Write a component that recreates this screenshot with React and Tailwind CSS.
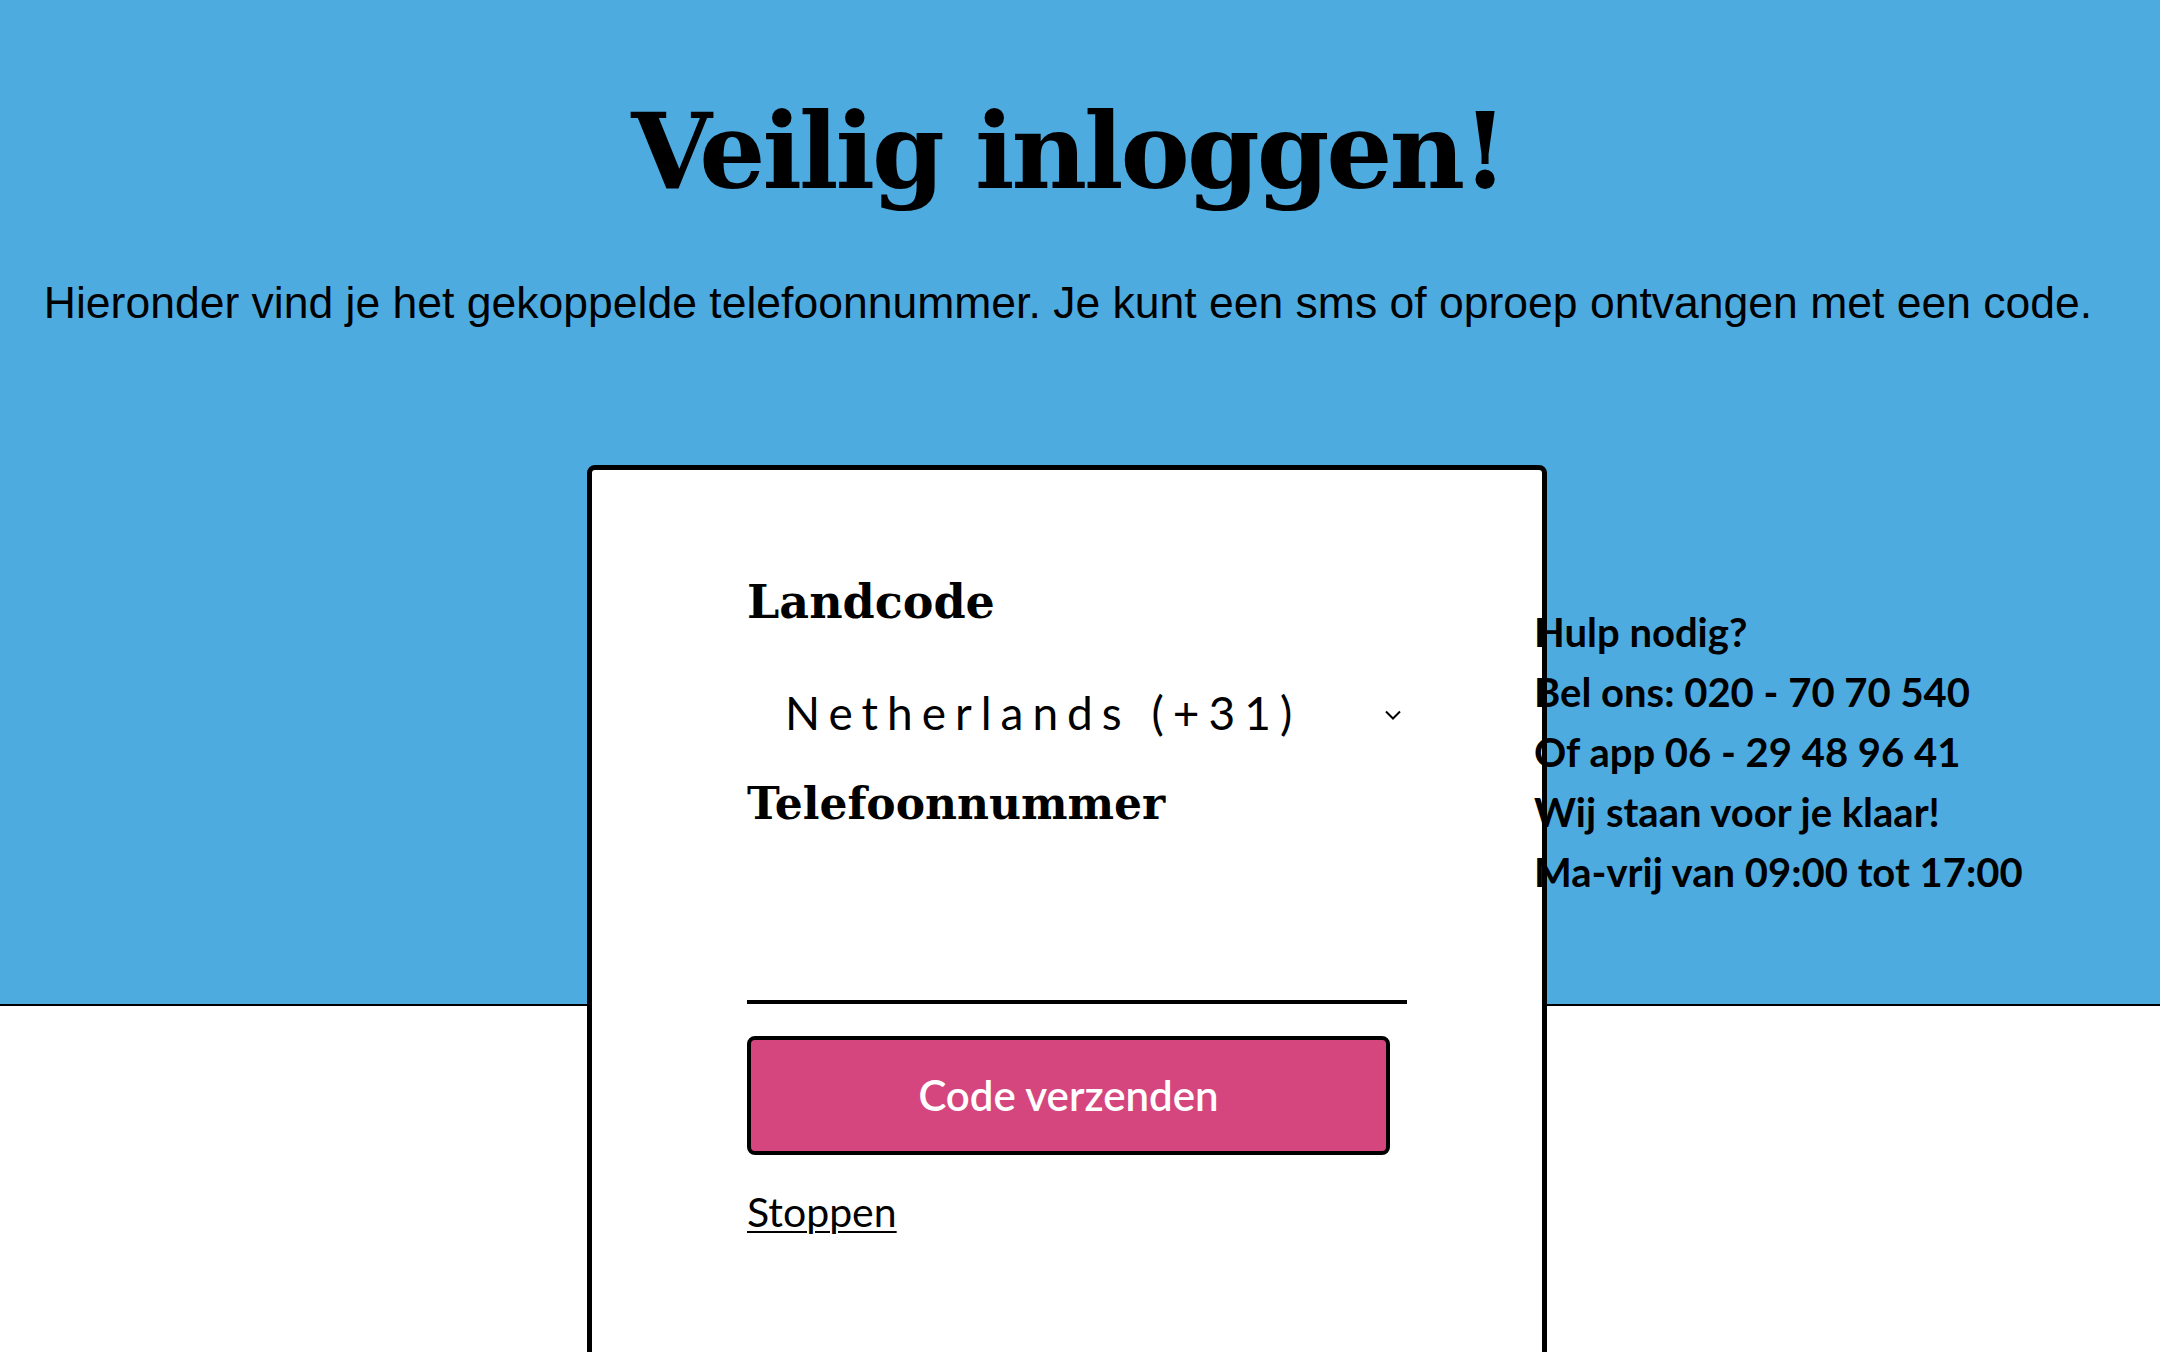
export default function App() {
  return (
    <div className="min-h-screen bg-white overflow-hidden">
      <div className="h-[1006px] bg-[#4eabe0] border-b-2 border-black">
        <div className="pr-[24px]">
          <h1 className="pt-[92px] text-center text-[104px] leading-[120px] font-bold tracking-[-3px] text-black font-['DejaVu_Serif',serif]">
            Veilig inloggen!
          </h1>
          <p className="mt-[65px] text-center text-[44.5px] leading-[52px] text-black font-['Liberation_Sans',Arial,sans-serif]">
            Hieronder vind je het gekoppelde telefoonnummer. Je kunt een sms of oproep ontvangen met een code.
          </p>
        </div>
        <div className="mt-[136px] flex items-start pl-[587px]">
          <div className="w-[960px] h-[1000px] shrink-0 bg-white border-[5px] border-black rounded-[8px] pl-[155px] pt-[104px]">
            <div className="w-[660px]">
              <div className="text-[46px] leading-[56px] font-bold text-black font-['DejaVu_Serif',serif]">Landcode</div>
              <div className="mt-[52px] h-[60px] flex items-center justify-between pl-[38px] pr-[6px]">
                <span className="text-[46px] tracking-[9px] text-black font-['Lato',sans-serif]">Netherlands (+31)</span>
                <svg width="16" height="10" viewBox="0 0 16 10" className="mt-[6px]">
                  <path d="M1 1.5 L8 8.5 L15 1.5" fill="none" stroke="black" strokeWidth="2" />
                </svg>
              </div>
              <div className="mt-[34px] text-[44px] leading-[56px] font-bold text-black font-['DejaVu_Serif',serif]">Telefoonnummer</div>
              <div className="mt-[168px] h-[4px] w-[660px] bg-black"></div>
              <button className="mt-[32px] w-[643px] h-[119px] bg-[#d5467e] border-4 border-black rounded-[8px] text-white text-[42px] font-semibold font-['Lato',sans-serif]">
                Code verzenden
              </button>
              <div className="mt-[33px]">
                <a href="#" className="text-[41px] leading-[48px] text-black underline underline-offset-4 decoration-2 font-['Lato',sans-serif]">Stoppen</a>
              </div>
            </div>
          </div>
          <div className="-ml-[13px] mt-[137px] text-[40px] leading-[60px] font-bold text-black font-['Lato',sans-serif]">
            <div>Hulp nodig?</div>
            <div>Bel ons: 020 - 70 70 540</div>
            <div>Of app 06 - 29 48 96 41</div>
            <div>Wij staan voor je klaar!</div>
            <div>Ma-vrij van 09:00 tot 17:00</div>
          </div>
        </div>
      </div>
    </div>
  );
}
